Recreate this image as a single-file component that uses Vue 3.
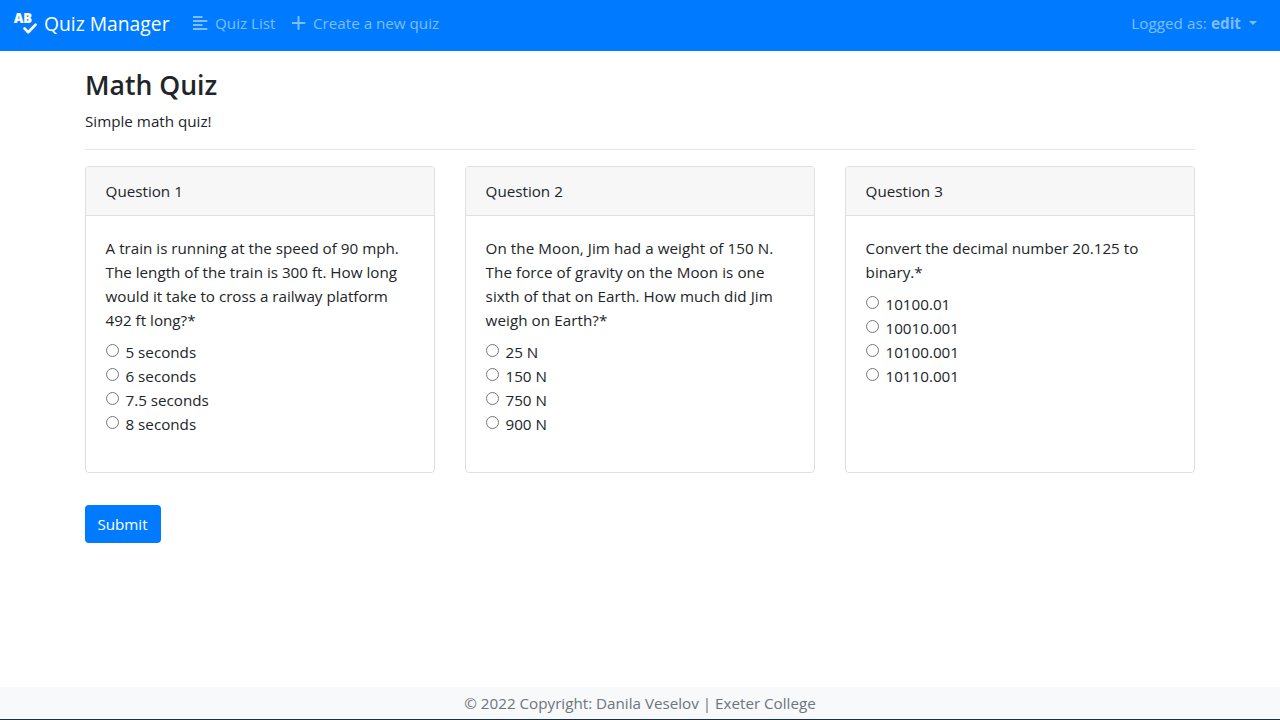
<script setup>
const questions = [
  {
    lines: ['A train is running at the speed of 90 mph.', 'The length of the train is 300 ft. How long', 'would it take to cross a railway platform', '492 ft long?*'],
    options: ['5 seconds', '6 seconds', '7.5 seconds', '8 seconds']
  },
  {
    lines: ['On the Moon, Jim had a weight of 150 N.', 'The force of gravity on the Moon is one', 'sixth of that on Earth. How much did Jim', 'weigh on Earth?*'],
    options: ['25 N', '150 N', '750 N', '900 N']
  },
  {
    lines: ['Convert the decimal number 20.125 to', 'binary.*'],
    options: ['10100.01', '10010.001', '10100.001', '10110.001']
  }
]
</script>

<template>
  <div class="page">
    <nav class="navbar">
      <a class="brand">
        <svg class="logo" width="24" height="24" viewBox="0 0 24 24">
          <text x="1" y="12.2" textLength="18" lengthAdjust="spacingAndGlyphs">AB</text>
          <path d="M11.5 17.4l3.7 3.8 7.4-7.6" fill="none" stroke="#fff" stroke-width="2.7" stroke-linecap="round" stroke-linejoin="round" />
        </svg>
        <span>Quiz Manager</span>
      </a>
      <a class="link list">
        <svg width="15" height="14" viewBox="0 0 15 14"><path d="M0 1h9.5M0 5h14.3M0 9h9.5M0 13h14.3" stroke="currentColor" stroke-width="1.9" /></svg>
        <span>Quiz List</span>
      </a>
      <a class="link create">
        <svg width="14" height="14" viewBox="0 0 14 14"><path d="M6.5 .9v12.2M.5 7h12" stroke="currentColor" stroke-width="2" stroke-linecap="round" /></svg>
        <span>Create a new quiz</span>
      </a>
      <a class="link user"><span>Logged as: <b>edit</b></span><i class="caret"></i></a>
    </nav>
    <main>
      <h1>Math Quiz</h1>
      <p class="intro">Simple math quiz!</p>
      <hr />
      <div class="cards">
        <section v-for="(q, i) in questions" :key="i" class="card">
          <header>Question {{ i + 1 }}</header>
          <div class="body">
            <p><span v-for="line in q.lines" :key="line" class="line">{{ line }}</span></p>
            <label v-for="o in q.options" :key="o"><input type="radio" :name="'q' + i" /><span>{{ o }}</span></label>
          </div>
        </section>
      </div>
      <button>Submit</button>
    </main>
    <footer>© 2022 Copyright: Danila Veselov | Exeter College</footer>
  </div>
</template>

<style>
body { margin: 0; overflow: hidden; }
</style>

<style scoped>
* { box-sizing: border-box; }
.page { height: 720px; display: flex; flex-direction: column; background: #fff; color: #212529; font: 15.2px/24px "Open Sans", "Noto Sans", sans-serif; }
.navbar { height: 51px; flex: none; display: flex; align-items: center; padding: 0 23px 5px 13px; background: #007bff; color: #fff; white-space: nowrap; }
.brand { display: flex; align-items: center; width: 180px; font-size: 19.3px; line-height: 30px; }
.brand span { padding-top: 1px; }
.logo { flex: none; margin-right: 7px; overflow: visible; }
.logo text { font: 800 13.4px "Open Sans", sans-serif; fill: #fff; stroke: #fff; stroke-width: .2px; }
.link { display: flex; align-items: center; color: #80bdff; }
.link svg { flex: none; margin-right: 7px; }
.list { width: 99px; }
.user { margin-left: auto; }
.user span { letter-spacing: .07px; }
.caret { margin: 0 0 0 8px; border-top: 4px solid; border-left: 4px solid transparent; border-right: 4px solid transparent; }
main { width: 1110px; margin: 0 auto; flex: 1; }
h1 { margin: 17px 0 7px; font-size: 26.6px; line-height: 34px; font-weight: 600; }
.intro { margin: 0 0 16px; }
hr { height: 1px; margin: 0 0 16px; border: 0; background: #e5e5e5; }
.cards { display: grid; grid-template-columns: repeat(3, 1fr); gap: 30px; height: 307px; }
.card { border: 1px solid #dfdfdf; border-radius: 4px; }
header { height: 49px; padding: 12px 19.6px; background: #f7f7f7; border-bottom: 1px solid #dfdfdf; border-radius: 3px 3px 0 0; }
.body { padding: 20px 19.6px; }
p { margin: 0 0 8px; }
.line { display: block; white-space: nowrap; }
.card:nth-child(2) .line { letter-spacing: .06px; }
label { display: flex; height: 24px; }
input { width: 13px; height: 13px; margin: 4px 6.5px 0 .4px; }
button { display: block; width: 76px; height: 38px; margin-top: 32px; padding: 0 1px 0 0; border: 0; border-radius: 4px; background: #007bff; color: #fff; font: inherit; }
footer { height: 33px; padding-top: 4px; flex: none; background: #f8f9fa; color: #6c757d; text-align: center; border-bottom: 1px solid #1c2e40; }
</style>
